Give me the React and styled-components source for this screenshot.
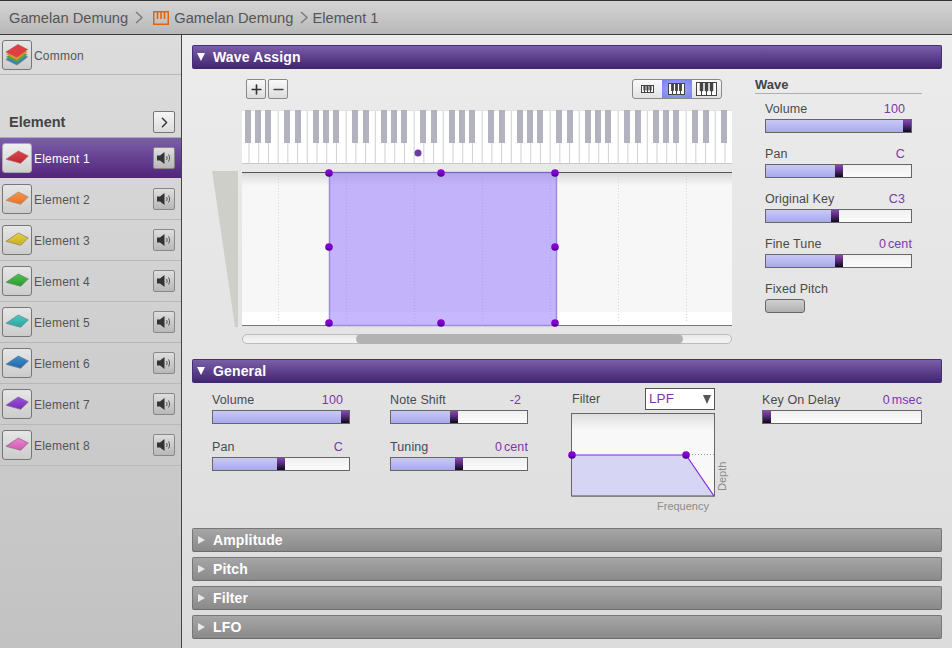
import React from "react";
import styled, { createGlobalStyle } from "styled-components";
import { Plus, Minus, ChevronRight } from "lucide-react";

const elements = [
  { name: "Element 1", color: "#e0454b", dark: "#b92a32", edge: "#a86a6c", active: true },
  { name: "Element 2", color: "#f8934a", dark: "#e87226", edge: "#a88a70" },
  { name: "Element 3", color: "#e6d040", dark: "#c8ae24", edge: "#90886a" },
  { name: "Element 4", color: "#4cc04c", dark: "#2c9a30", edge: "#6a8a6a" },
  { name: "Element 5", color: "#4cc8c4", dark: "#2aa4a2", edge: "#6a8a8a" },
  { name: "Element 6", color: "#3c90d0", dark: "#2068a8", edge: "#6a7a8a" },
  { name: "Element 7", color: "#a050e0", dark: "#7a2cb8", edge: "#7a6a90" },
  { name: "Element 8", color: "#ec84d4", dark: "#d058b0", edge: "#906f88" },
];

const Global = createGlobalStyle`
  html, body {
    margin: 0;
    padding: 0;
    width: 952px;
    height: 648px;
    overflow: hidden;
    font-family: "Liberation Sans", Arial, sans-serif;
    color: #444;
  }
`;

const Piano = () => (
  <svg width="16" height="14" viewBox="0 0 16 14">
    <rect x="0.75" y="0.75" width="14.5" height="12.5" fill="none" stroke="#e06408" strokeWidth="1.5" />
    <path d="M4.5 1v7M8 1v7M11.5 1v7" stroke="#e06408" strokeWidth="1.6" />
  </svg>
);

const Crumb = () => (
  <svg width="8" height="13" viewBox="0 0 8 13">
    <path d="M1 1l6 5.5L1 12" fill="none" stroke="#777" strokeWidth="1.3" />
  </svg>
);

const Plate = ({ id, color, dark, edge }) => (
  <svg width="28" height="28" viewBox="1 1 28 28">
    <defs>
      <linearGradient id={id} x1="0" y1="0" x2="0" y2="1">
        <stop offset="0" stopColor={color} />
        <stop offset="1" stopColor={dark} />
      </linearGradient>
    </defs>
    <path d="M4 16.300L16.300 8l10 5-7.600 7.300z" fill={`url(#${id})`} stroke={edge} strokeWidth="0.8" />
  </svg>
);

const Stack = () => (
  <svg width="28" height="28" viewBox="1 1 28 28">
    <path d="M4 19.500l12-7.500 9.500 5-10.500 8z" fill="#3a80c0" stroke="#777" strokeWidth="0.7" />
    <path d="M4 17l12-7.500 9.500 5-10.500 8z" fill="#45a845" />
    <path d="M4 14.500L16 7l9.500 5L15 20z" fill="#ec8a30" />
    <path d="M4 12L16 4.500l9.500 5L15 17z" fill="#dc4044" stroke="#a84a4a" strokeWidth="0.6" />
  </svg>
);

const Speaker = () => (
  <svg width="16" height="14" viewBox="0 0 16 14">
    <path d="M1 4.500h3L8.500 1v12L4 9.500H1z" fill="#333" />
    <path d="M10.500 5c.8 1.200.8 2.800 0 4M12.500 3.500c1.400 2 1.400 5 0 7" fill="none" stroke="#555" strokeWidth="1" />
  </svg>
);

const MiniKeys = ({ w, h, keys }) => {
  const step = (w - 1) / keys;
  const keyWidth = w / 6;
  return (
    <svg width={w} height={h} viewBox={`0 0 ${w} ${h}`}>
      <rect x="0.5" y="0.5" width={w - 1} height={h - 1} fill="#fff" stroke="#444" />
      {Array.from({ length: keys - 1 }, (_, i) => (
        <rect key={i} x={step * (i + 1) + 0.5 - keyWidth / 2} y="0.5" width={keyWidth} height={h * 0.62} fill="#444" />
      ))}
      {Array.from({ length: keys - 1 }, (_, i) => (
        <line key={i} x1={step * (i + 1) + 0.5} x2={step * (i + 1) + 0.5} y1={h * 0.6} y2={h} stroke="#444" />
      ))}
    </svg>
  );
};

const blackKeys = [];
for (let o = 0; o < 8; o++) {
  [3, 13, 23, 42, 53].forEach((x) => {
    if (x + o * 68 < 484) blackKeys.push(x + o * 68);
  });
}

const Keyboard = () => (
  <KeySvg width="490" height="54" viewBox="0 0 490 54">
    <rect width="490" height="54" fill="#fff" />
    {Array.from({ length: 50 }, (_, i) => (
      <line key={i} x1={7 + i * 9.714} x2={7 + i * 9.714} y1="0" y2="54" stroke="#d0d0d0" />
    ))}
    <line x1="0" x2="490" y1="53.500" y2="53.500" stroke="#c8c8c8" />
    <line x1="0" x2="490" y1="0.500" y2="0.500" stroke="#e4e4e4" />
    {blackKeys.map((x) => (
      <rect key={x} x={x} y="0" width="6" height="33" fill="#b3b3bf" />
    ))}
    <circle cx="176" cy="43" r="3.500" fill="#6c3ca4" />
  </KeySvg>
);

const Handle = ({ x, y }) => <circle cx={x} cy={y} r="3.800" fill="url(#knob)" />;

// origin of the drawing is page (212,171)
const WaveMap = () => (
  <MapSvg width="520" height="157" viewBox="0 0 520 157">
    <defs>
      <linearGradient id="mapBg" x1="0" y1="0" x2="0" y2="1">
        <stop offset="0" stopColor="#d8d8d8" />
        <stop offset="0.09" stopColor="#f7f7f7" />
        <stop offset="0.91" stopColor="#f7f7f7" />
        <stop offset="0.92" stopColor="#fff" />
        <stop offset="1" stopColor="#fff" />
      </linearGradient>
      <linearGradient id="knob" x1="0" y1="0" x2="0" y2="1">
        <stop offset="0" stopColor="#8a00d8" />
        <stop offset="0.6" stopColor="#7a00c8" />
        <stop offset="1" stopColor="#3c0070" />
      </linearGradient>
    </defs>
    <path d="M0 0h26v156h-3z" fill="#cfcfca" />
    <rect x="30" y="1" width="490" height="153" fill="url(#mapBg)" />
    <line x1="30" x2="520" y1="1.500" y2="1.500" stroke="#555" />
    <line x1="30" x2="520" y1="154.500" y2="154.500" stroke="#777" />
    {[66, 134, 202, 270, 338, 406, 474].map((x) => (
      <line key={x} x1={x + 0.5} x2={x + 0.5} y1="2" y2="150" stroke="#d4d4d4" strokeDasharray="1 2" />
    ))}
    <rect x="117.500" y="1.500" width="227" height="153" fill="#8f6ffd" fillOpacity="0.5" stroke="#9a8aee" strokeWidth="1.500" />
    <line x1="117" x2="345" y1="1.500" y2="1.500" stroke="#7a64c8" />
    <Handle x={117} y={2} />
    <Handle x={229} y={2} />
    <Handle x={343} y={2} />
    <Handle x={117} y={76} />
    <Handle x={343} y={76} />
    <Handle x={117} y={152} />
    <Handle x={229} y={152} />
    <Handle x={343} y={152} />
  </MapSvg>
);

// origin of the drawing is page (571,413)
const FilterGraph = () => (
  <GraphSvg width="160" height="104" viewBox="0 0 160 104">
    <defs>
      <linearGradient id="graphBg" x1="0" y1="0" x2="0" y2="1">
        <stop offset="0" stopColor="#dedede" />
        <stop offset="0.2" stopColor="#f8f8f8" />
        <stop offset="1" stopColor="#f8f8f8" />
      </linearGradient>
      <linearGradient id="knobF" x1="0" y1="0" x2="0" y2="1">
        <stop offset="0" stopColor="#8a00d8" />
        <stop offset="0.6" stopColor="#7a00c8" />
        <stop offset="1" stopColor="#3c0070" />
      </linearGradient>
    </defs>
    <rect x="0.500" y="0.500" width="143" height="82.500" fill="url(#graphBg)" stroke="#666" />
    <path d="M1 42h114l28 40.500H1z" fill="#d6d5f4" />
    <line x1="115" x2="143" y1="41.500" y2="41.500" stroke="#999" strokeDasharray="1 2" />
    <path d="M1 42h114l28 41" fill="none" stroke="#8a22e6" strokeWidth="1.200" />
    <path d="M0.500 83h143" stroke="#666" />
    <circle cx="1" cy="42" r="3.800" fill="url(#knobF)" />
    <circle cx="115" cy="42" r="3.800" fill="url(#knobF)" />
    <AxisText transform="translate(155 78) rotate(-90)">Depth</AxisText>
    <AxisText x="86" y="97">Frequency</AxisText>
  </GraphSvg>
);

const Slider = ({ pos }) => (
  <Track>
    <Fill $pos={pos} />
    <Knob />
  </Track>
);

const Value = ({ children, unit, inset }) => (
  <ValueText $inset={inset}>
    {children}
    {unit && <Unit>{unit}</Unit>}
  </ValueText>
);

const Field = ({ label, value, unit, pos, inset = 7 }) => (
  <div>
    <LabelRow>
      <span>{label}</span>
      <Value unit={unit} inset={unit ? 0 : inset}>{value}</Value>
    </LabelRow>
    <Slider pos={pos} />
  </div>
);

const Section = ({ title, open, children }) => (
  <div>
    <SectionHead $open={open}>
      <Arrow $open={open} />
      {title}
    </SectionHead>
    {children}
  </div>
);

export default function App() {
  return (
    <Page>
      <Global />
      <TopBar>
        <CrumbText>Gamelan Demung</CrumbText>
        <Crumb />
        <PianoSlot><Piano /></PianoSlot>
        <CrumbText>Gamelan Demung</CrumbText>
        <Crumb />
        <CrumbText $tight>Element 1</CrumbText>
      </TopBar>
      <Content>
        <Sidebar>
          <CommonRow>
            <Thumb><Stack /></Thumb>
            <RowName>Common</RowName>
          </CommonRow>
          <ElementHead>
            <ElementTitle>Element</ElementTitle>
            <SquareButton><ChevronRight size={17} strokeWidth={2} color="#333" /></SquareButton>
          </ElementHead>
          {elements.map((el, i) => (
            <ElementRow key={el.name} $active={el.active}>
              <Thumb $active={el.active}>
                <Plate id={`plate${i}`} color={el.color} dark={el.dark} edge={el.edge} />
              </Thumb>
              <RowName $active={el.active}>{el.name}</RowName>
              <SquareButton $sound><Speaker /></SquareButton>
            </ElementRow>
          ))}
        </Sidebar>
        <Main>
          <Section title="Wave Assign" open>
            <WaveBody>
              <MapColumn>
                <ToolRow>
                  <ZoomButtons>
                    <ZoomButton><Plus size={15} strokeWidth={2.6} color="#333" /></ZoomButton>
                    <ZoomButton><Minus size={15} strokeWidth={2.6} color="#444" /></ZoomButton>
                  </ZoomButtons>
                  <RangeGroup>
                    <RangeButton><MiniKeys w={13} h={8} keys={4} /></RangeButton>
                    <RangeButton $active><MiniKeys w={17} h={12} keys={4} /></RangeButton>
                    <RangeButton><MiniKeys w={21} h={14} keys={4} /></RangeButton>
                  </RangeGroup>
                </ToolRow>
                <Keyboard />
                <WaveMap />
                <Scroll><ScrollThumb /></Scroll>
              </MapColumn>
              <WavePanel>
                <PanelTitle>Wave</PanelTitle>
                <PanelFields>
                  <Field label="Volume" value="100" pos={137} />
                  <Field label="Pan" value="C" pos={69} />
                  <Field label="Original Key" value="C3" pos={65} />
                  <Field label="Fine Tune" value="0" unit="cent" pos={69} />
                  <div>
                    <LabelRow>Fixed Pitch</LabelRow>
                    <PitchButton />
                  </div>
                </PanelFields>
              </WavePanel>
            </WaveBody>
          </Section>
          <Section title="General" open>
            <GeneralBody>
              <SliderColumn>
                <Field label="Volume" value="100" pos={128} />
                <Field label="Pan" value="C" pos={64} />
              </SliderColumn>
              <SliderColumn>
                <Field label="Note Shift" value="-2" pos={59} />
                <Field label="Tuning" value="0" unit="cent" pos={64} />
              </SliderColumn>
              <FilterColumn>
                <FilterHead>
                  <span>Filter</span>
                  <FilterSelect>
                    LPF
                    <SelectArrow />
                  </FilterSelect>
                </FilterHead>
                <FilterGraph />
              </FilterColumn>
              <DelayColumn>
                <Field label="Key On Delay" value="0" unit="msec" pos={0} />
              </DelayColumn>
            </GeneralBody>
          </Section>
          <Collapsed>
            <Section title="Amplitude" />
            <Section title="Pitch" />
            <Section title="Filter" />
            <Section title="LFO" />
          </Collapsed>
        </Main>
      </Content>
    </Page>
  );
}

const Page = styled.div`
  width: 952px;
  height: 648px;
  display: flex;
  flex-direction: column;
  overflow: hidden;
`;

const TopBar = styled.header`
  height: 33px;
  flex: none;
  display: flex;
  align-items: center;
  gap: 7px;
  padding-left: 9px;
  background: linear-gradient(#d4d4d4, #b8b8b8);
  border-top: 1px solid #333;
  border-bottom: 1px solid #3c3c3c;
`;

const CrumbText = styled.span`
  font-size: 14.7px;
  color: #555;
  white-space: nowrap;
  ${(p) => p.$tight && "margin-left: -3px;"}
`;

const PianoSlot = styled.span`
  display: flex;
  margin: 0 -2px 0 3px;
`;

const Content = styled.div`
  flex: 1;
  display: flex;
  min-height: 0;
`;

const Sidebar = styled.aside`
  width: 181px;
  flex: none;
  border-right: 1px solid #444;
  background: linear-gradient(#dcdcdc, #c2c2c2);
`;

const CommonRow = styled.div`
  height: 39px;
  display: flex;
  align-items: center;
  padding-left: 2px;
  border-bottom: 1px solid #b8b8b8;
`;

const Thumb = styled.div`
  width: 30px;
  height: 30px;
  box-sizing: border-box;
  flex: none;
  display: flex;
  align-items: center;
  justify-content: center;
  border: 1px solid ${(p) => (p.$active ? "#aaa" : "#777")};
  border-radius: 3px;
  background: ${(p) =>
    p.$active ? "linear-gradient(#f0f0f0, #cfcfcf)" : "linear-gradient(#e6e6e6, #cccccc)"};
`;

const RowName = styled.span`
  margin: 2px 0 0 2px;
  font-size: 12px;
  letter-spacing: 0.2px;
  color: ${(p) => (p.$active ? "#fff" : "#555")};
`;

const ElementHead = styled.div`
  height: 63px;
  box-sizing: border-box;
  display: flex;
  align-items: flex-end;
  justify-content: space-between;
  padding: 0 6px 4px 9px;
  border-bottom: 1px solid #ababab;
`;

const ElementTitle = styled.span`
  font-size: 14.5px;
  font-weight: bold;
  color: #444;
  line-height: 22px;
`;

const SquareButton = styled.div`
  width: 22px;
  height: 22px;
  box-sizing: border-box;
  flex: none;
  display: flex;
  align-items: center;
  justify-content: center;
  border: 1px solid ${(p) => (p.$sound ? "#888" : "#777")};
  border-radius: 2px;
  background: ${(p) =>
    p.$sound ? "linear-gradient(#dedede, #b8b8b8)" : "linear-gradient(#f6f6f6, #dcdcdc)"};
`;

const ElementRow = styled.div`
  height: 40px;
  display: flex;
  align-items: center;
  padding: 0 6px 0 2px;
  ${(p) =>
    p.$active
      ? "background: linear-gradient(#7b5fa9, #52247a); margin-bottom: 1px;"
      : "border-bottom: 1px solid #b8b8b8;"}
  & > ${RowName} {
    flex: 1;
  }
`;

const Main = styled.main`
  flex: 1;
  box-sizing: border-box;
  padding: 10px 10px 0;
  background: linear-gradient(#ececec, #dcdcdc);
  min-width: 0;
`;

const SectionHead = styled.div`
  height: 24px;
  box-sizing: border-box;
  display: flex;
  align-items: center;
  padding-left: 5px;
  gap: 7px;
  border-radius: 2px;
  font-size: 14px;
  font-weight: bold;
  letter-spacing: 0.15px;
  color: #fff;
  border: 1px solid ${(p) => (p.$open ? "#44307a" : "#777")};
  border-bottom-color: ${(p) => (p.$open ? "#3a2a6c" : "#6c6c6c")};
  background: ${(p) =>
    p.$open ? "linear-gradient(#7a5ea8, #432572)" : "linear-gradient(#a6a6a6, #8a8a8a)"};
`;

const Arrow = styled.span`
  width: 0;
  height: 0;
  flex: none;
  ${(p) =>
    p.$open
      ? `margin: 0 1px 0 -1px;
         border-left: 4.5px solid transparent;
         border-right: 4.5px solid transparent;
         border-top: 8px solid #fff;`
      : `margin-right: 1px;
         border-top: 4px solid transparent;
         border-bottom: 4px solid transparent;
         border-left: 7px solid #e8e8e8;`}
`;

const WaveBody = styled.div`
  height: 290px;
  display: flex;
  padding-left: 20px;
`;

const MapColumn = styled.div`
  width: 520px;
  flex: none;
  display: flex;
  flex-direction: column;
`;

const ToolRow = styled.div`
  display: flex;
  justify-content: space-between;
  padding: 10px 10px 11px 34px;
`;

const ZoomButtons = styled.div`
  display: flex;
  gap: 2px;
`;

const ZoomButton = styled.div`
  width: 20px;
  height: 20px;
  box-sizing: border-box;
  display: flex;
  align-items: center;
  justify-content: center;
  border: 1px solid #888;
  border-radius: 2px;
  background: linear-gradient(#fafafa, #dcdcdc);
`;

const RangeGroup = styled.div`
  width: 90px;
  height: 20px;
  box-sizing: border-box;
  display: flex;
  border: 1px solid #888;
  border-radius: 3px;
  overflow: hidden;
  background: linear-gradient(#fafafa, #e2e2e2);
`;

const RangeButton = styled.div`
  flex: 1;
  display: flex;
  align-items: center;
  justify-content: center;
  ${(p) => p.$active && "background: radial-gradient(#a8acff, #7a80ee);"}
`;

const KeySvg = styled.svg`
  display: block;
  margin-left: 30px;
  flex: none;
`;

const MapSvg = styled.svg`
  display: block;
  margin-top: 7px;
  flex: none;
  overflow: visible;
`;

const Scroll = styled.div`
  margin: 6px 0 0 30px;
  height: 10px;
  box-sizing: border-box;
  border: 1px solid #bbb;
  border-radius: 5px;
  background: linear-gradient(#eaeaea, #f4f4f4);
  padding-left: 113px;
  display: flex;
`;

const ScrollThumb = styled.div`
  width: 327px;
  margin: -1px 0;
  border-radius: 5px;
  background: #b2b2b2;
`;

const WavePanel = styled.div`
  width: 167px;
  margin-left: 23px;
  padding-top: 9px;
  flex: none;
`;

const PanelTitle = styled.div`
  height: 15px;
  line-height: 14px;
  font-size: 13px;
  font-weight: bold;
  color: #444;
  border-bottom: 1px solid #b0b0b0;
`;

const PanelFields = styled.div`
  display: flex;
  flex-direction: column;
  gap: 13px;
  margin: 7px 10px 0;
`;

const LabelRow = styled.div`
  height: 18px;
  display: flex;
  justify-content: space-between;
  font-size: 12.500px;
  line-height: 16px;
  letter-spacing: 0.1px;
  color: #4a4a4a;
  white-space: nowrap;
`;

const ValueText = styled.span`
  padding-right: ${(p) => p.$inset}px;
  color: #7b38a8;
`;

const Unit = styled.span`
  margin-left: 2px;
`;

const Track = styled.div`
  height: 14px;
  box-sizing: border-box;
  display: flex;
  border: 1px solid #666;
  background: linear-gradient(#f0f0f0, #fbfbfb);
`;

const Fill = styled.div`
  width: ${(p) => p.$pos}px;
  background: linear-gradient(#c9c9f6, #a9a9ec);
`;

const Knob = styled.div`
  width: 8px;
  background: linear-gradient(#8a45b8, #5c2f84 40%, #0e0818);
`;

const PitchButton = styled.div`
  width: 40px;
  height: 14px;
  box-sizing: border-box;
  border: 1px solid #666;
  border-radius: 3px;
  background: linear-gradient(#d0d0d0, #b0b0b0);
`;

const GeneralBody = styled.div`
  height: 145px;
  display: flex;
  padding: 9px 0 0 20px;
  box-sizing: border-box;
`;

const SliderColumn = styled.div`
  width: 138px;
  margin-right: 40px;
  flex: none;
  display: flex;
  flex-direction: column;
  gap: 15px;
`;

const FilterColumn = styled.div`
  width: 144px;
  margin: -4px 0 0 3px;
  flex: none;
`;

const FilterHead = styled.div`
  display: flex;
  justify-content: space-between;
  font-size: 12.500px;
  letter-spacing: 0.1px;
  line-height: 22px;
  color: #4a4a4a;
  padding-left: 1px;
  height: 22px;
  margin-bottom: 3px;
`;

const FilterSelect = styled.div`
  width: 70px;
  height: 22px;
  box-sizing: border-box;
  display: flex;
  align-items: center;
  justify-content: space-between;
  padding: 0 3px;
  background: #fff;
  border: 1px solid #555;
  font-size: 13.500px;
  color: #7b38a8;
`;

const SelectArrow = styled.span`
  width: 0;
  height: 0;
  border-left: 4.5px solid transparent;
  border-right: 4.5px solid transparent;
  border-top: 9px solid #555;
`;

const GraphSvg = styled.svg`
  display: block;
  overflow: visible;
`;

const AxisText = styled.text`
  font-family: "Liberation Sans", Arial, sans-serif;
  font-size: 11px;
  fill: #8c8c8c;
`;

const DelayColumn = styled.div`
  width: 160px;
  margin-left: 47px;
  flex: none;
`;

const Collapsed = styled.div`
  display: flex;
  flex-direction: column;
  gap: 5px;
`;
